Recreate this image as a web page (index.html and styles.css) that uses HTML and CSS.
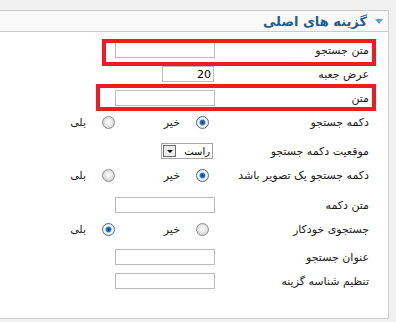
FILE: index.html
```html
<!DOCTYPE html>
<html lang="fa">
<head>
<meta charset="utf-8">
<title>گزینه های اصلی</title>
<link rel="stylesheet" href="styles.css">
</head>
<body>
<div class="panel">
  <div class="panel-head">
    <span class="arrow"></span>
    <h3 class="panel-title">گزینه های اصلی</h3>
  </div>
  <div class="panel-body">
    <div class="row"><label class="lbl">متن جستجو</label><input class="txt" type="text"></div>
    <div class="row"><label class="lbl">عرض جعبه</label><input class="txt num" type="text" value="20"></div>
    <div class="row"><label class="lbl">متن</label><input class="txt" type="text"></div>
    <div class="row after-radio-a">
      <label class="lbl">دکمه جستجو</label>
      <span class="opt"><input class="radio" type="radio" name="r1" checked><span>خیر</span></span>
      <span class="opt"><input class="radio" type="radio" name="r1"><span>بلی</span></span>
    </div>
    <div class="row">
      <label class="lbl">موقعیت دکمه جستجو</label>
      <span class="select"><select class="sel"><option>راست</option></select><span class="sel-btn"></span></span>
    </div>
    <div class="row after-radio-b">
      <label class="lbl">دکمه جستجو یک تصویر باشد</label>
      <span class="opt"><input class="radio" type="radio" name="r2" checked><span>خیر</span></span>
      <span class="opt"><input class="radio" type="radio" name="r2"><span>بلی</span></span>
    </div>
    <div class="row"><label class="lbl">متن دکمه</label><input class="txt" type="text"></div>
    <div class="row after-radio-c">
      <label class="lbl">جستجوی خودکار</label>
      <span class="opt"><input class="radio" type="radio" name="r3"><span>خیر</span></span>
      <span class="opt"><input class="radio" type="radio" name="r3" checked><span>بلی</span></span>
    </div>
    <div class="row"><label class="lbl">عنوان جستجو</label><input class="txt" type="text"></div>
    <div class="row"><label class="lbl">تنظیم شناسه گزینه</label><input class="txt" type="text"></div>
    <div class="mark mark-one"></div>
    <div class="mark mark-two"></div>
  </div>
</div>
</body>
</html>
```
FILE: styles.css
```css
body {
  margin: 0;
  background: #f1f1f1;
  font-family: "DejaVu Sans", sans-serif;
  font-size: 11px;
  color: #1a1a1a;
}
.panel {
  margin: 10px 7px 0 -20px;
  border: 1px solid #cccccc;
  background: #ffffff;
}
.panel-head {
  height: 20px;
  background: #f9f9f9;
  border-bottom: 1px solid #cccccc;
  display: flex;
  align-items: center;
  direction: rtl;
  padding-right: 5px;
}
.arrow {
  width: 0;
  height: 0;
  border-left: 4px solid transparent;
  border-right: 4px solid transparent;
  border-top: 5px solid #5b9dd9;
  margin-left: 8px;
}
.panel-title {
  margin: 0;
  font-size: 13px;
  font-weight: bold;
  color: #1f5f90;
}
.panel-body {
  position: relative;
  height: 286px;
  box-sizing: border-box;
  padding: 6px 19px 0 0;
  direction: rtl;
}
.row {
  display: flex;
  align-items: center;
  height: 24px;
}
.after-radio-a { margin-bottom: 5px; }
.after-radio-b { margin-bottom: 6px; }
.after-radio-c { margin-bottom: 4px; }
.lbl {
  width: 154px;
  flex: none;
}
.txt {
  width: 100px;
  height: 16px;
  box-sizing: border-box;
  border: 1px solid #bbbbbb;
  margin: 0;
  padding: 0 2px;
  font: inherit;
  font-size: 11px;
  background: #fff;
}
.num {
  width: 52px;
  margin-right: 1px;
  direction: ltr;
  text-align: right;
  color: #000;
}
.opt {
  width: 94px;
  display: flex;
  align-items: center;
  gap: 16px;
}
.radio {
  appearance: none;
  -webkit-appearance: none;
  width: 13px;
  height: 13px;
  margin: 0 6px 0 0;
  border: 1px solid #8e8f8f;
  border-radius: 50%;
  box-sizing: border-box;
  background: radial-gradient(circle at 50% 45%, #ffffff 0, #f2f2f2 2px, #d4d4d4 6px);
}
.radio:checked {
  border-color: #4e6d8a;
  background: radial-gradient(circle at 50% 50%, #0b3f7d 0, #2a7fd0 2.5px, #ffffff 3.5px, #e3e3e3 6px);
}
.select {
  display: flex;
  align-items: center;
  width: 52px;
  height: 16px;
  box-sizing: border-box;
  margin-right: 2px;
  border: 1px solid #a5a5a5;
  background: #fff;
}
.sel {
  appearance: none;
  -webkit-appearance: none;
  flex: 1;
  min-width: 0;
  border: 0;
  padding: 0 2px 0 0;
  margin: 0;
  font: inherit;
  font-size: 10px;
  background: transparent;
  color: #000;
}
.sel-btn {
  width: 13px;
  height: 12px;
  margin-left: 1px;
  box-sizing: border-box;
  border: 1px solid #6e6e6e;
  background: #ececec;
  display: flex;
  align-items: center;
  justify-content: center;
}
.sel-btn::after {
  content: "";
  border-left: 3px solid transparent;
  border-right: 3px solid transparent;
  border-top: 3px solid #000;
}
.mark {
  position: absolute;
  border: 4px solid #ed1c24;
  box-sizing: border-box;
  height: 27px;
}
.mark-one {
  top: 7px;
  right: 12px;
  width: 274px;
}
.mark-two {
  top: 52px;
  right: 12px;
  width: 280px;
}
```
